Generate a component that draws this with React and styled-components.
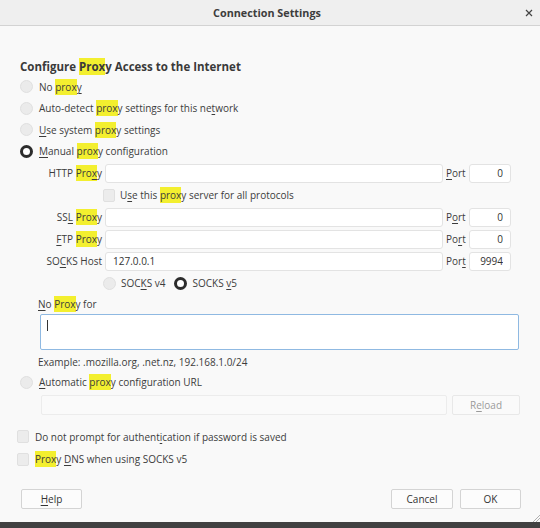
import styled, { createGlobalStyle } from 'styled-components'

const GlobalStyle = createGlobalStyle`
  html, body { margin: 0; padding: 0; }
  body {
    background: #f9f9f9;
    font-family: "Open Sans", "Noto Sans", sans-serif;
    font-size: 10px;
    color: #3c3c3c;
  }
`

const Window = styled.div`
  position: relative;
  width: 540px;
  height: 528px;
  display: flex;
  flex-direction: column;
  overflow: hidden;
`

const TitleBar = styled.header`
  flex: none;
  height: 25px;
  display: grid;
  grid-template-columns: 1fr auto 1fr;
  align-items: center;
  background: #efefef;
  border-bottom: 1px solid #d3d3d3;
`

const Title = styled.h1`
  grid-column: 2;
  margin: 0 0 0 -6px;
  font-size: 10.8px;
  font-weight: 700;
  color: #3d3d3d;
`

const Close = styled.button`
  justify-self: end;
  margin-right: 4px;
  width: 14px;
  height: 14px;
  padding: 0;
  border: 0;
  background: none;
  display: flex;
  align-items: center;
  justify-content: center;
`

const Body = styled.main`
  flex: 1;
  display: flex;
  flex-direction: column;
  padding: 0 19px 0 20px;
  background: #f9f9f9;
`

const Heading = styled.h2`
  margin: 30px 0 0;
  height: 20px;
  display: flex;
  align-items: center;
  font-size: 11.5px;
  font-weight: 700;
  color: #3a3a3a;
`

const Row = styled.div`
  display: flex;
  align-items: center;
  gap: ${(p) => p.$gap ?? 6}px;
  height: ${(p) => p.$h ?? 21.5}px;
  margin-top: ${(p) => p.$mt ?? 0}px;
  margin-left: ${(p) => p.$ml ?? 0}px;
  white-space: nowrap;
`

const Radio = styled.span`
  flex: none;
  box-sizing: border-box;
  width: 13px;
  height: 13px;
  border-radius: 50%;
  margin-left: ${(p) => p.$ml ?? 0}px;
  background: ${(p) => (p.$checked ? '#fff' : '#ebebeb')};
  border: ${(p) => (p.$checked ? '3.5px solid #2c2c2c' : '1px solid #e0e0e0')};
`

const Check = styled.span`
  flex: none;
  box-sizing: border-box;
  width: 12px;
  height: 13px;
  border-radius: 2px;
  background: #ececec;
  border: 1px solid #e0e0e0;
`

const Hit = styled.mark`
  background: #f3ef2f;
  color: inherit;
  padding: 1px 0;
`

const Key = styled.span`
  text-decoration: underline;
  text-underline-offset: 2px;
  text-decoration-thickness: 1px;
`

const ProxyGrid = styled.div`
  display: grid;
  margin-left: 18px;
  grid-template-columns: 64px 338px 20px 42px;
  grid-auto-rows: 22px;
  column-gap: 3px;
  align-items: center;
`

const FieldLabel = styled.span`
  text-align: right;
  white-space: nowrap;
`

const PortLabel = styled.span`
  white-space: nowrap;
`

const Input = styled.input`
  box-sizing: border-box;
  width: 100%;
  height: 19px;
  margin: 0;
  padding: 0 7px;
  border: 1px solid #e3e3e3;
  border-radius: 3px;
  background: #fff;
  font: inherit;
  color: #333;
  text-align: ${(p) => (p.$right ? 'right' : 'left')};
  outline: none;
`

const Span = styled.div`
  grid-column: 2 / 5;
  display: flex;
  align-items: center;
  gap: 5px;
  margin-left: -2px;
  white-space: nowrap;
`

const NoProxyBox = styled.div`
  box-sizing: border-box;
  width: 479px;
  height: 36px;
  margin-left: 20px;
  padding: 5px 6px;
  background: #fff;
  border: 1px solid #8fb9e2;
  border-radius: 2px;
`

const Caret = styled.span`
  display: block;
  width: 1px;
  height: 11px;
  background: #333;
`

const UrlRow = styled.div`
  display: flex;
  gap: 5px;
  height: 20px;
  margin-top: 4px;
  margin-left: 21px;
`

const UrlInput = styled.div`
  box-sizing: border-box;
  width: 406px;
  height: 20px;
  border: 1px solid #ececec;
  border-radius: 2px;
  background: #fafafa;
`

const Button = styled.button`
  box-sizing: border-box;
  width: ${(p) => p.$w}px;
  height: 20px;
  padding: 0;
  border: 1px solid ${(p) => (p.$disabled ? '#e8e8e8' : '#d4d4d4')};
  border-radius: 2px;
  background: ${(p) => (p.$disabled ? '#fafafa' : '#fcfcfc')};
  color: ${(p) => (p.$disabled ? '#9a9a9a' : '#333')};
  font: inherit;
`

const Footer = styled.div`
  display: flex;
  align-items: center;
  margin-top: 19px;
  margin-left: 1px;
  height: 20px;
`

const Actions = styled.div`
  margin-left: auto;
  display: flex;
  gap: 7px;
`

const BottomBar = styled.div`
  flex: none;
  height: 6px;
  background: #414141;
`

const Grip = styled.svg`
  position: absolute;
  right: 0;
  bottom: 6px;
`

export default function App() {
  return (
    <Window>
      <GlobalStyle />
      <TitleBar>
        <Title>Connection Settings</Title>
        <Close aria-label="Close">
          <svg width="8" height="8" viewBox="0 0 8 8">
            <path d="M1 1L7 7M7 1L1 7" stroke="#444" strokeWidth="1.2" />
          </svg>
        </Close>
      </TitleBar>
      <Body>
        <Heading>
          Configure&nbsp;<Hit>Prox</Hit>y Access to the Internet
        </Heading>
        <Row>
          <Radio />
          <span>
            No <Hit>prox</Hit><Key>y</Key>
          </span>
        </Row>
        <Row>
          <Radio />
          <span>
            Auto-detect <Hit>prox</Hit>y settings for this ne<Key>t</Key>work
          </span>
        </Row>
        <Row>
          <Radio />
          <span>
            <Key>U</Key>se system <Hit>prox</Hit>y settings
          </span>
        </Row>
        <Row>
          <Radio $checked />
          <span>
            <Key>M</Key>anual <Hit>prox</Hit>y configuration
          </span>
        </Row>

        <ProxyGrid>
          <FieldLabel>
            HTTP <Hit>Pro<Key>x</Key></Hit>y
          </FieldLabel>
          <Input readOnly defaultValue="" />
          <PortLabel>
            <Key>P</Key>ort
          </PortLabel>
          <Input readOnly $right defaultValue="0" />

          <Span>
            <Check />
            <span>
              U<Key>s</Key>e this <Hit>prox</Hit>y server for all protocols
            </span>
          </Span>

          <FieldLabel>
            SS<Key>L</Key> <Hit>Prox</Hit>y
          </FieldLabel>
          <Input readOnly defaultValue="" />
          <PortLabel>
            P<Key>o</Key>rt
          </PortLabel>
          <Input readOnly $right defaultValue="0" />

          <FieldLabel>
            <Key>F</Key>TP <Hit>Prox</Hit>y
          </FieldLabel>
          <Input readOnly defaultValue="" />
          <PortLabel>
            Po<Key>r</Key>t
          </PortLabel>
          <Input readOnly $right defaultValue="0" />

          <FieldLabel>
            SO<Key>C</Key>KS Host
          </FieldLabel>
          <Input readOnly defaultValue="127.0.0.1" />
          <PortLabel>
            Por<Key>t</Key>
          </PortLabel>
          <Input readOnly $right defaultValue="9994" />

          <Span>
            <Radio />
            <span>
              SOC<Key>K</Key>S v4
            </span>
            <Radio $checked $ml={4} />
            <span>
              SOCKS <Key>v</Key>5
            </span>
          </Span>
        </ProxyGrid>

        <Row $h={20} $ml={18}>
          <span>
            <Key>N</Key>o <Hit>Prox</Hit>y for
          </span>
        </Row>
        <NoProxyBox>
          <Caret />
        </NoProxyBox>
        <Row $h={23} $ml={18}>
          Example: .mozilla.org, .net.nz, 192.168.1.0/24
        </Row>
        <Row $h={18}>
          <Radio />
          <span>
            <Key>A</Key>utomatic <Hit>prox</Hit>y configuration URL
          </span>
        </Row>
        <UrlRow>
          <UrlInput />
          <Button $w={68} $disabled>
            R<Key>e</Key>load
          </Button>
        </UrlRow>

        <Row $h={21} $mt={11} $ml={-3}>
          <Check />
          <span>
            Do not prompt for authent<Key>i</Key>cation if password is saved
          </span>
        </Row>
        <Row $h={22} $mt={1} $ml={-3}>
          <Check />
          <span>
            <Hit>Prox</Hit>y <Key>D</Key>NS when using SOCKS v5
          </span>
        </Row>

        <Footer>
          <Button $w={61}>
            <Key>H</Key>elp
          </Button>
          <Actions>
            <Button $w={62}>Cancel</Button>
            <Button $w={61}>OK</Button>
          </Actions>
        </Footer>
      </Body>
      <BottomBar />
      <Grip width="10" height="10" viewBox="0 0 10 10">
        <path d="M3 10L10 3M6 10L10 6" stroke="#b0b0b0" strokeWidth="1" />
      </Grip>
    </Window>
  )
}
